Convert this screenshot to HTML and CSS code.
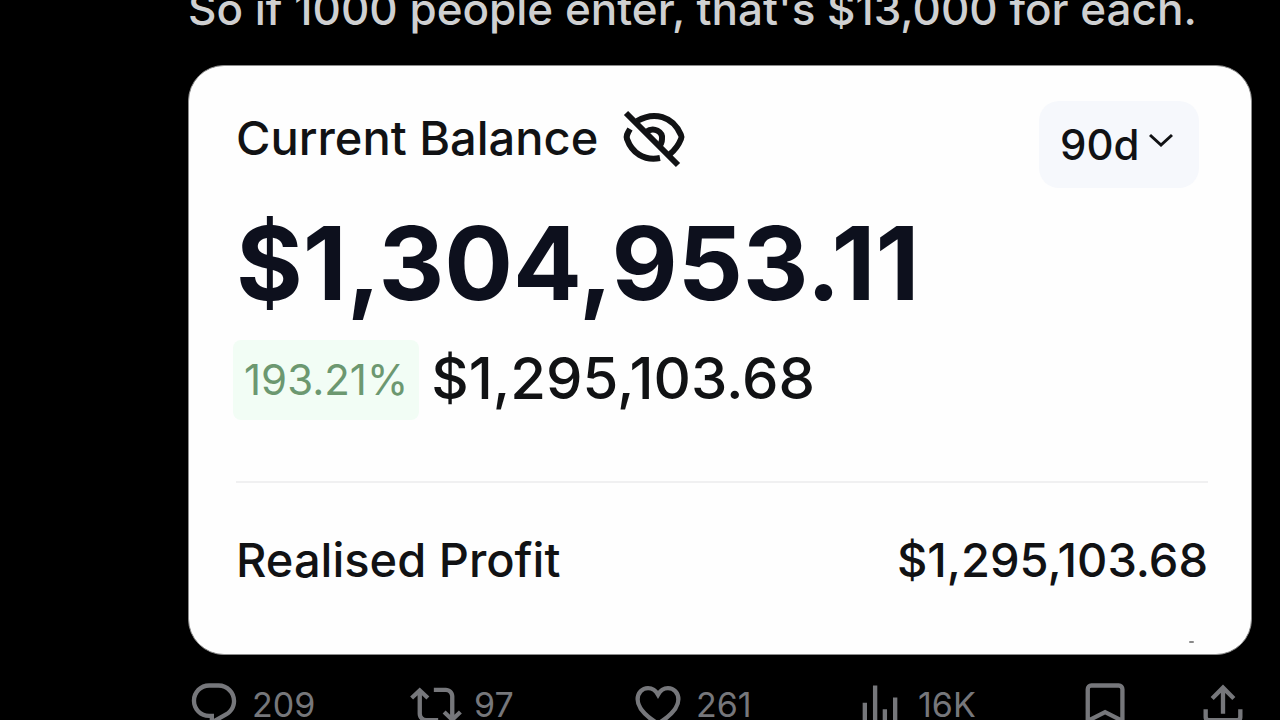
FILE: index.html
```html
<!DOCTYPE html>
<html lang="en">
<head>
<meta charset="utf-8">
<meta name="viewport" content="width=device-width, initial-scale=1">
<title>Post</title>
<link rel="stylesheet" href="styles.css">
</head>
<body>
<article class="post">
  <p class="post-text">So if 1000 people enter, that's $13,000 for each.</p>

  <section class="card">
    <header class="card-header">
      <h1 class="card-title">Current Balance</h1>
      <button class="hide-button" type="button" aria-label="Hide balance">
        <svg class="eye" viewBox="0 0 68 64" fill="none" stroke="currentColor" stroke-width="6">
          <path d="M6 6l52 52"/>
          <path d="M17 14C34 4 53 9 61 28Q62 30 61 32C59 37 56 42 50 47"/>
          <path d="M10 22C7 27 6 29 7 32C12 46 24 54 40 51"/>
          <path d="M26 25C34 19 43 25 42 32C42 36 41 38 38 40"/>
        </svg>
      </button>
      <div class="range">
        <select class="range-select" aria-label="Period">
          <option>90d</option>
        </select>
        <svg class="chevron" viewBox="0 0 24 16" fill="none" stroke="currentColor" stroke-width="3"><path d="M1 2l11 10L23 2"/></svg>
      </div>
    </header>
    <p class="balance">$1,304,953.11</p>
    <div class="change">
      <span class="badge">193.21%</span>
      <span class="change-value">$1,295,103.68</span>
    </div>
    <div class="profit">
      <span>Realised Profit</span>
      <span>$1,295,103.68</span>
    </div>
    <i class="speck"></i>
  </section>

  <footer class="actions">
    <button class="action" type="button" aria-label="Reply, 209">
      <svg class="icon" viewBox="0 0 24 24" fill="currentColor"><path d="M1.751 10c0-4.42 3.584-8 8.005-8h4.366c4.49 0 8.129 3.64 8.129 8.13 0 2.96-1.607 5.68-4.196 7.11l-8.054 4.46v-3.69h-.067c-4.49.1-8.183-3.51-8.183-8.01zm8.005-6c-3.317 0-6.005 2.69-6.005 6 0 3.37 2.77 6.08 6.138 6.01l.351-.01h1.761v2.3l5.087-2.81c1.951-1.08 3.163-3.13 3.163-5.36 0-3.39-2.744-6.13-6.129-6.13H9.756z"/></svg>
      <span>209</span>
    </button>
    <button class="action" type="button" aria-label="Repost, 97">
      <svg class="icon" viewBox="0 0 24 24" fill="currentColor"><path d="M4.5 3.88l4.432 4.14-1.364 1.46L5.5 7.55V16c0 1.1.896 2 2 2H13v2H7.5c-2.209 0-4-1.79-4-4V7.55L1.432 9.48.068 8.02 4.5 3.88zM16.5 6H11V4h5.5c2.209 0 4 1.79 4 4v8.45l2.068-1.93 1.364 1.46-4.432 4.14-4.432-4.14 1.364-1.46 2.068 1.93V8c0-1.1-.896-2-2-2z"/></svg>
      <span>97</span>
    </button>
    <button class="action" type="button" aria-label="Like, 261">
      <svg class="icon" viewBox="0 0 24 24" fill="none" stroke="currentColor" stroke-width="2"><path d="M12 7.2C10.800 5 9.200 4.200 7.400 4.200C4.700 4.200 2.600 6.300 2.600 9.400C2.600 13.800 6.700 17.400 12 20.600C17.300 17.400 21.400 13.800 21.400 9.400C21.400 6.300 19.300 4.200 16.600 4.200C14.800 4.200 13.200 5 12 7.200z"/></svg>
      <span>261</span>
    </button>
    <button class="action" type="button" aria-label="Views, 16K">
      <svg class="icon" viewBox="0 0 24 24" fill="currentColor"><path d="M8.750 21V3h2v18h-2zM18 21V8.500h2V21h-2zM4 21V11h2v10H4zM13.250 21v-7h2v7h-2z"/></svg>
      <span>16K</span>
    </button>
    <button class="action" type="button" aria-label="Bookmark">
      <svg class="icon" viewBox="0 0 24 24" fill="none" stroke="currentColor" stroke-width="2"><path d="M4.500 19.300V4.700C4.500 3.700 5.200 3 6.200 3H18.800C19.800 3 20.500 3.700 20.500 4.700V19.300L12.500 15.300z"/></svg>
    </button>
    <button class="action" type="button" aria-label="Share">
      <svg class="icon" viewBox="0 0 24 24" fill="none" stroke="currentColor" stroke-width="2"><path d="M12 16V4M7 9l5-5 5 5M4 14v3.500c0 1 .600 1.500 1.500 1.500h13c.900 0 1.500-.500 1.500-1.500V14"/></svg>
    </button>
  </footer>
</article>
</body>
</html>
```
FILE: styles.css
```css
* {
  box-sizing: border-box;
}

body {
  margin: 0;
  height: 100vh;
  overflow: hidden;
  background: #000;
  color: #111214;
  font-family: Inter, "Liberation Sans", sans-serif;
}

p, h1 {
  margin: 0;
  font-weight: 400;
}

button, select {
  border: 0;
  padding: 0;
  background: none;
  color: inherit;
  font: inherit;
  cursor: pointer;
}

svg {
  display: block;
}

.post {
  margin: -20px 28px 0 188px;
}

.post-text {
  margin-bottom: 27px;
  color: #cfd0d1;
  font-size: 44px;
  font-weight: 500;
  line-height: 58px;
  white-space: nowrap;
}

.card {
  position: relative;
  padding: 35px 43px 62px 47px;
  border: 1px solid #8c8c8c;
  border-radius: 36px;
  background: #fefefe;
  font-weight: 500;
}

.card-header {
  display: flex;
  align-items: flex-start;
}

.card-title {
  font-size: 47px;
  font-weight: 500;
  line-height: 74px;
}

.hide-button {
  margin: 6px 0 0 22px;
}

.eye {
  width: 68px;
  height: 64px;
}

.range {
  position: relative;
  margin: 0 9px 0 auto;
}

.range-select {
  appearance: none;
  display: block;
  width: 160px;
  height: 87px;
  padding-left: 21px;
  border-radius: 20px;
  background: #f6f8fc;
  font-size: 42px;
}

.chevron {
  position: absolute;
  top: 32px;
  right: 26px;
  width: 24px;
  height: 16px;
  pointer-events: none;
}

.balance {
  margin-top: 13px;
  color: #0d101d;
  font-size: 102px;
  font-weight: 700;
  line-height: 124px;
}

.change {
  display: flex;
  align-items: flex-start;
  gap: 12px;
  margin: 15px 0 0 -3px;
}

.badge {
  padding: 0 11px;
  border-radius: 8px;
  background: #f2fdf5;
  color: #6c9870;
  font-size: 42px;
  font-weight: 400;
  line-height: 80px;
}

.change-value {
  font-size: 58px;
  line-height: 76px;
}

.profit {
  display: flex;
  justify-content: space-between;
  margin-top: 61px;
  padding-top: 45px;
  border-top: 2px solid #f0f0f1;
  font-size: 47px;
  line-height: 64px;
}

.speck {
  position: absolute;
  right: 57px;
  bottom: 11px;
  width: 5px;
  height: 2px;
  border-radius: 1px;
  background: #8a8a8a;
}

.actions {
  display: grid;
  grid-template-columns: 222fr 222fr 222fr 224fr 119fr 55fr;
  margin-top: 24px;
  color: #76777b;
  font-size: 34px;
  line-height: 52px;
}

.action {
  display: flex;
  align-items: center;
  gap: 12px;
}

.icon {
  flex: none;
  width: 52px;
  height: 52px;
}
```
